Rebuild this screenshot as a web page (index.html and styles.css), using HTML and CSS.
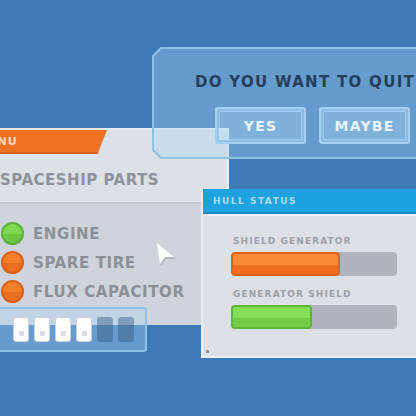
FILE: index.html
```html
<!DOCTYPE html>
<html>
<head>
<meta charset="utf-8">
<link rel="stylesheet" href="styles.css">
</head>
<body>
<div class="stage">
  <div class="menu-win">
    <div class="menu-header"><div class="menu-tab">MENU</div></div>
    <div class="menu-title">SPACESHIP PARTS</div>
    <ul class="menu-list">
      <li class="part"><span class="dot dot-green"></span>ENGINE</li>
      <li class="part"><span class="dot dot-orange"></span>SPARE TIRE</li>
      <li class="part"><span class="dot dot-orange"></span>FLUX CAPACITOR</li>
    </ul>
  </div>

  <svg class="cursor" width="22" height="26" viewBox="0 0 22 26">
    <polygon points="2,3 19,17 10,17 5,24" fill="#b3b8c0"/>
    <polygon points="1,1 18,15 9,15 4,22" fill="#ffffff"/>
  </svg>

  <div class="slots">
    <span class="slot on"></span><span class="slot on"></span><span class="slot on"></span><span class="slot on"></span><span class="slot off"></span><span class="slot off"></span>
  </div>

  <div class="quit">
    <svg class="quit-frame" width="300" height="112" viewBox="0 0 300 112">
      <polygon points="9,1 300,1 300,111 9,111 1,103 1,9" fill="rgba(170,212,245,0.38)" stroke="#8fc3e6" stroke-width="2"/>
    </svg>
    <div class="quit-q">DO YOU WANT TO QUIT?</div>
    <div class="quit-btns">
      <div class="btn">YES</div>
      <div class="btn">MAYBE</div>
    </div>
  </div>

  <div class="hull">
    <div class="hull-head">HULL STATUS</div>
    <div class="hull-body">
      <div class="stat">
        <div class="stat-label">SHIELD GENERATOR</div>
        <div class="bar"><div class="fill fill-orange" style="width:109px"></div></div>
      </div>
      <div class="stat">
        <div class="stat-label">GENERATOR SHIELD</div>
        <div class="bar"><div class="fill fill-green" style="width:81px"></div></div>
      </div>
      <span class="grip"></span>
    </div>
  </div>
</div>
</body>
</html>
```
FILE: styles.css
```css
* { box-sizing: border-box; }
html, body { margin: 0; padding: 0; }
body {
  width: 416px;
  height: 416px;
  overflow: hidden;
  background: #3c79b5;
  font-family: "DejaVu Sans", "Liberation Sans", sans-serif;
  font-weight: bold;
}
.stage { position: relative; width: 416px; height: 416px; overflow: hidden; }

/* Menu window */
.menu-win {
  position: absolute;
  left: -30px;
  top: 128px;
  width: 259px;
  height: 197px;
  background: #dce0e7;
  border-top: 2px solid #e9ecf1;
  border-right: 2px solid #e9ecf1;
  display: flex;
  flex-direction: column;
}
.menu-header { height: 24px; display: flex; }
.menu-tab {
  width: 137px;
  height: 24px;
  background: #ef7122;
  color: #fbd7bf;
  font-size: 11px;
  letter-spacing: 1px;
  line-height: 24px;
  padding-left: 7px;
  clip-path: polygon(0 0, 100% 0, 93% 100%, 0 100%);
  box-shadow: inset 0 -2px 0 #d9601a;
}
.menu-title {
  height: 50px;
  padding-left: 30px;
  color: #8e939b;
  font-size: 15px;
  letter-spacing: 0.5px;
  line-height: 52px;
  border-bottom: 2px solid #c5c9d1;
}
.menu-list {
  list-style: none;
  margin: 0;
  padding: 18px 0 0 31px;
  flex: 1;
  background: #cfd3db;
  display: flex;
  flex-direction: column;
  gap: 6px;
}
.part {
  display: flex;
  align-items: center;
  gap: 9px;
  height: 23px;
  color: #8b9099;
  font-size: 15px;
  letter-spacing: 0.6px;
}
.dot {
  width: 23px;
  height: 23px;
  border-radius: 50%;
  flex: none;
}
.dot-green {
  background: linear-gradient(#7fd84f 0 55%, #6cc844 55% 100%);
  border: 2px solid #5ab238;
}
.dot-orange {
  background: linear-gradient(#f5802c 0 55%, #e96e20 55% 100%);
  border: 2px solid #d95f19;
}

.cursor { position: absolute; left: 156px; top: 242px; }

/* slot bar */
.slots {
  position: absolute;
  left: -10px;
  top: 307px;
  width: 157px;
  height: 45px;
  background: rgba(170, 212, 245, 0.38);
  border: 2px solid #8fc3e6;
  border-radius: 3px;
  display: flex;
  align-items: center;
  gap: 5px;
  padding-left: 21px;
  padding-top: 0;
}
.slot {
  width: 16px;
  height: 25px;
  border-radius: 3px;
  position: relative;
}
.slot.on {
  background: #ffffff;
  border: 1px solid #cdd2da;
}
.slot.on::after {
  content: "";
  position: absolute;
  left: 5px;
  top: 13px;
  width: 5px;
  height: 5px;
  background: #dcdfe4;
}
.slot.off { background: rgba(50, 90, 130, 0.45); }

/* quit dialog */
.quit {
  position: absolute;
  left: 152px;
  top: 47px;
  width: 300px;
  height: 112px;
}
.quit-frame { position: absolute; left: 0; top: 0; }
.quit-q {
  position: relative;
  padding: 25px 0 0 43px;
  color: #253f5c;
  font-size: 15px;
  letter-spacing: 1.3px;
  line-height: 20px;
  white-space: nowrap;
}
.quit-btns {
  position: relative;
  display: flex;
  gap: 13px;
  padding: 15px 0 0 63px;
}
.btn {
  width: 91px;
  height: 37px;
  border: 2px solid #a6d1ee;
  border-radius: 3px;
  background: rgba(190, 225, 250, 0.3);
  box-shadow: inset 0 0 0 2px rgba(120, 180, 225, 0.6), inset 0 0 0 3px rgba(200, 230, 250, 0.5);
  color: #eaf4fc;
  font-size: 14px;
  letter-spacing: 1.2px;
  display: flex;
  align-items: center;
  justify-content: center;
}

/* hull window */
.hull {
  position: absolute;
  left: 201px;
  top: 189px;
  width: 230px;
  height: 169px;
  background: #dce0e7;
  border-left: 2px solid #eaedf2;
  border-bottom: 2px solid #eaedf2;
  display: flex;
  flex-direction: column;
}
.hull-head {
  height: 25px;
  background: #1fa2e0;
  border-bottom: 2px solid #178bc5;
  color: #a9def6;
  font-size: 9px;
  letter-spacing: 1.5px;
  line-height: 24px;
  padding-left: 10px;
}
.hull-body {
  flex: 1;
  position: relative;
  border-top: 2px solid #eef0f4;
  padding: 20px 0 0 28px;
  display: flex;
  flex-direction: column;
  gap: 13px;
}
.stat { display: flex; flex-direction: column; gap: 6px; }
.stat-label {
  color: #9ca1aa;
  font-size: 9px;
  letter-spacing: 1.1px;
  line-height: 10px;
  padding-left: 2px;
}
.bar {
  width: 166px;
  height: 24px;
  background: #b0b4bc;
  border-radius: 4px;
  overflow: hidden;
}
.fill { height: 100%; border-radius: 4px; }
.fill-orange {
  background: linear-gradient(#fa8a36 0 55%, #ec7020 55% 100%);
  border: 2px solid #e0621a;
}
.fill-green {
  background: linear-gradient(#86dd57 0 55%, #72cc48 55% 100%);
  border: 2px solid #5cb638;
}
.grip {
  position: absolute;
  left: 3px;
  bottom: 3px;
  width: 3px;
  height: 3px;
  background: #8d929a;
}
```
